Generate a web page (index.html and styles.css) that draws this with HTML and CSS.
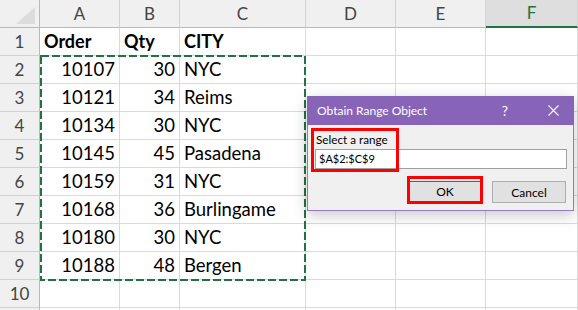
FILE: index.html
```html
<!DOCTYPE html>
<html lang="en">
<head>
    <meta charset="UTF-8">
    <meta name="viewport" content="width=device-width, initial-scale=1.0">
    <title>Obtain Range Object</title>
    <link rel="stylesheet" href="styles.css">
</head>
<body>

<div class="sheet">
    <div class="grid">
        <div class="hd corner"><span class="tri"></span></div>
        <div class="hd col">A</div>
        <div class="hd col">B</div>
        <div class="hd col">C</div>
        <div class="hd col">D</div>
        <div class="hd col">E</div>
        <div class="hd col active">F</div>

        <div class="hd row">1</div>
        <div class="c b">Order</div><div class="c b">Qty</div><div class="c b">CITY</div><div class="c"></div><div class="c"></div><div class="c"></div>
        <div class="hd row">2</div>
        <div class="c n">10107</div><div class="c n">30</div><div class="c">NYC</div><div class="c"></div><div class="c"></div><div class="c"></div>
        <div class="hd row">3</div>
        <div class="c n">10121</div><div class="c n">34</div><div class="c">Reims</div><div class="c"></div><div class="c"></div><div class="c"></div>
        <div class="hd row">4</div>
        <div class="c n">10134</div><div class="c n">30</div><div class="c">NYC</div><div class="c"></div><div class="c"></div><div class="c"></div>
        <div class="hd row">5</div>
        <div class="c n">10145</div><div class="c n">45</div><div class="c">Pasadena</div><div class="c"></div><div class="c"></div><div class="c"></div>
        <div class="hd row">6</div>
        <div class="c n">10159</div><div class="c n">31</div><div class="c">NYC</div><div class="c"></div><div class="c"></div><div class="c"></div>
        <div class="hd row">7</div>
        <div class="c n">10168</div><div class="c n">36</div><div class="c">Burlingame</div><div class="c"></div><div class="c"></div><div class="c"></div>
        <div class="hd row">8</div>
        <div class="c n">10180</div><div class="c n">30</div><div class="c">NYC</div><div class="c"></div><div class="c"></div><div class="c"></div>
        <div class="hd row">9</div>
        <div class="c n">10188</div><div class="c n">48</div><div class="c">Bergen</div><div class="c"></div><div class="c"></div><div class="c"></div>
        <div class="hd row">10</div>
        <div class="c"></div><div class="c"></div><div class="c"></div><div class="c"></div><div class="c"></div><div class="c"></div>
        <div class="hd row"></div>
        <div class="c"></div><div class="c"></div><div class="c"></div><div class="c"></div><div class="c"></div><div class="c"></div>
    </div>

    <!-- marching ants around A2:C9 -->
    <svg class="copy-range" width="266" height="226" viewBox="0 0 266 226">
        <rect x="1" y="1" width="264" height="224" fill="none" stroke="#217346" stroke-width="2" stroke-dasharray="8 3"/>
    </svg>

    <div class="dialog">
        <div class="dlg-title">
            <span>Obtain Range Object</span>
            <span class="dlg-ctrls">
                <span class="help">?</span>
                <svg width="11" height="11" viewBox="0 0 11 11"><path d="M0.5 0.5 L10.5 10.5 M10.5 0.5 L0.5 10.5" stroke="#fff" stroke-width="1.1"/></svg>
            </span>
        </div>
        <div class="dlg-body">
            <div class="dlg-label">Select a range</div>
            <div class="dlg-input">$A$2:$C$9</div>
            <div class="dlg-buttons">
                <button class="btn ok">OK</button>
                <button class="btn">Cancel</button>
            </div>
        </div>
        <div class="mark mark-range"></div>
        <div class="mark mark-ok"></div>
    </div>
</div>

</body>
</html>
```

FILE: styles.css
```css
body {
    margin: 0;
    padding: 0;
    background-color: #fff;
    font-family: Lato, "Liberation Sans", sans-serif;
}
.sheet {
    position: relative;
    width: 578px;
    height: 310px;
    overflow: hidden;
}
.grid {
    display: grid;
    grid-template-columns: 40px 80px 60px 126px 90px 90px 1fr;
    grid-auto-rows: 28px;
}
.c,
.hd {
    box-sizing: border-box;
    border-right: 1px solid #dadada;
    border-bottom: 1px solid #dadada;
    line-height: 27px;
    white-space: nowrap;
    overflow: hidden;
}
.c {
    padding: 0 4px;
    font-size: 18.5px;
    color: #000;
}
.c.b {
    font-weight: bold;
    font-size: 18px;
}
.c.n {
    text-align: right;
}
.hd {
    background-color: #f0f0f0;
    color: #444;
    font-size: 17px;
    text-align: center;
}
.hd.col {
    border-right-color: #d2d2d2;
    border-bottom-color: #b9b9b9;
}
.hd.row {
    border-right-color: #b9b9b9;
    border-bottom-color: #d2d2d2;
}
.hd.corner {
    position: relative;
    border-right-color: #b9b9b9;
    border-bottom-color: #b9b9b9;
}
.tri {
    position: absolute;
    left: 16px;
    top: 7px;
    width: 19px;
    height: 17px;
    background-color: #dcdcdc;
    clip-path: polygon(100% 0, 100% 100%, 0 100%);
}
.hd.active {
    background-color: #dedede;
    color: #217346;
    border-bottom: 2px solid #217346;
    line-height: 26px;
}
.copy-range {
    position: absolute;
    left: 40px;
    top: 55px;
}
.dialog {
    position: absolute;
    left: 307px;
    top: 96px;
    width: 267px;
    height: 115px;
    box-sizing: border-box;
    border: 1px solid #9479c4;
    border-top: none;
    background-color: #f0f0f0;
    box-shadow: 0 4px 14px rgba(0, 0, 0, 0.22);
    font-family: Lato, "Noto Sans", sans-serif;
}
.dlg-title {
    display: flex;
    justify-content: space-between;
    align-items: center;
    height: 29px;
    margin: 0 -1px;
    padding: 0 15px 0 10px;
    background-color: #8764b8;
    color: #fff;
    font-size: 12px;
}
.dlg-ctrls {
    display: flex;
    align-items: center;
    gap: 40px;
}
.help {
    font-size: 14px;
}
.dlg-body {
    padding: 6px 6px 0 7px;
    font-size: 11.7px;
    color: #000;
}
.dlg-label {
    line-height: 17px;
    padding-left: 1px;
    margin-bottom: 1px;
}
.dlg-input {
    box-sizing: border-box;
    width: 252px;
    height: 20px;
    padding: 0 3px;
    font-size: 11px;
    line-height: 18px;
    background-color: #fff;
    border: 1px solid #a0a0a0;
}
.dlg-buttons {
    display: flex;
    justify-content: flex-end;
    gap: 10px;
    margin-top: 12px;
    padding-right: 1px;
}
.btn {
    box-sizing: border-box;
    width: 74px;
    height: 22px;
    padding: 0;
    font-family: inherit;
    font-size: 12px;
    color: #000;
    background-color: #e1e1e1;
    border: 1px solid #adadad;
}
.btn.ok {
    border-color: #0078d7;
    border-width: 1px 1px 2px 1px;
}
.mark {
    position: absolute;
    box-sizing: border-box;
    border: 3px solid #f00;
}
.mark-range {
    left: 3px;
    top: 32px;
    width: 88px;
    height: 44px;
}
.mark-ok {
    left: 99px;
    top: 80px;
    width: 76px;
    height: 28px;
}
```
